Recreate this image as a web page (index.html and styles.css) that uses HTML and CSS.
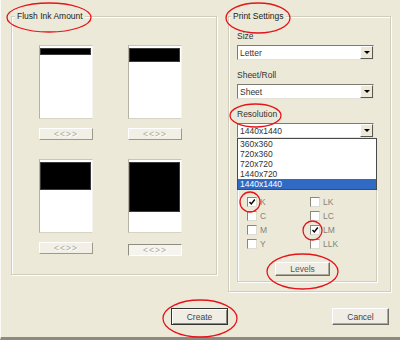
FILE: index.html
```html
<!DOCTYPE html>
<html>

<head>
  <title>Create Flush Pattern</title>
  <link rel="stylesheet" href="styles.css">
</head>

<body>
  <div class="window">
    <div class="panels">
      <fieldset class="group flush">
        <legend>Flush Ink Amount</legend>
        <div class="previews">
          <div class="cell">
            <div class="preview"><div class="ink" style="height: 7px"></div></div>
            <button class="nudge">&lt;&lt;&gt;&gt;</button>
          </div>
          <div class="cell">
            <div class="preview"><div class="ink" style="height: 14px"></div></div>
            <button class="nudge">&lt;&lt;&gt;&gt;</button>
          </div>
          <div class="cell">
            <div class="preview"><div class="ink" style="height: 28px"></div></div>
            <button class="nudge">&lt;&lt;&gt;&gt;</button>
          </div>
          <div class="cell">
            <div class="preview"><div class="ink" style="height: 50px"></div></div>
            <button class="nudge pressed">&lt;&lt;&gt;&gt;</button>
          </div>
        </div>
      </fieldset>

      <fieldset class="group settings">
        <legend>Print Settings</legend>
        <div class="field">
          <div class="label">Size</div>
          <div class="combo"><span>Letter</span><span class="drop"></span></div>
        </div>
        <div class="field">
          <div class="label">Sheet/Roll</div>
          <div class="combo"><span>Sheet</span><span class="drop"></span></div>
        </div>
        <div class="field">
          <div class="label">Resolution</div>
          <div class="combo"><span>1440x1440</span><span class="drop"></span></div>
          <ul class="list">
            <li>360x360</li>
            <li>720x360</li>
            <li>720x720</li>
            <li>1440x720</li>
            <li class="selected">1440x1440</li>
          </ul>
          <div class="inks">
            <div class="checks">
              <label class="check"><span class="box on"></span>K</label>
              <label class="check"><span class="box"></span>LK</label>
              <label class="check"><span class="box"></span>C</label>
              <label class="check"><span class="box"></span>LC</label>
              <label class="check"><span class="box"></span>M</label>
              <label class="check"><span class="box on"></span>LM</label>
              <label class="check"><span class="box"></span>Y</label>
              <label class="check"><span class="box"></span>LLK</label>
            </div>
            <button class="btn levels">Levels</button>
          </div>
        </div>
      </fieldset>
    </div>

    <div class="actions">
      <button class="btn default">Create</button>
      <button class="btn">Cancel</button>
    </div>

    <svg class="marks" width="400" height="340" viewBox="0 0 400 340">
      <ellipse cx="49" cy="17.5" rx="42" ry="14.5" />
      <ellipse cx="258" cy="18" rx="32" ry="15" />
      <ellipse cx="255.5" cy="115.5" rx="25.5" ry="11.5" />
      <ellipse cx="250" cy="202" rx="10" ry="10" />
      <ellipse cx="312.5" cy="230.5" rx="9.5" ry="9.5" />
      <ellipse cx="302.5" cy="271.5" rx="35.5" ry="17.5" />
      <ellipse cx="200" cy="318.5" rx="37" ry="18.5" />
    </svg>
  </div>
</body>

</html>
```

FILE: styles.css
```css
body {
  margin: 0;
  font-family: "Liberation Sans", Arial, sans-serif;
  font-size: 8.5px;
  color: #333;
  background-color: #ece9d8;
}

.window {
  position: relative;
  width: 400px;
  height: 340px;
  box-sizing: border-box;
  border-left: 1px solid #fbfaf6;
  border-bottom: 3px solid #8c8a80;
  background-color: #ece9d8;
}

.panels {
  display: flex;
  align-items: flex-start;
  gap: 11px;
  padding-left: 10px;
}

.group {
  margin: 10px 0 0;
  box-sizing: border-box;
  border: 1px solid #d0cdbd;
  box-shadow: inset 1px 1px 0 #fff, 1px 1px 0 #fff;
  min-width: 0;
}

.group legend {
  padding: 0 2px;
  line-height: 12px;
  background-color: #ece9d8;
  color: #222;
}

.flush {
  width: 206px;
  padding: 23px 0 18px 3px;
}

.settings {
  width: 163px;
  padding: 8px 13px 9px 2px;
}

/* flush ink previews */

.previews {
  display: grid;
  grid-template-columns: 54px 54px;
  column-gap: 35px;
  row-gap: 19px;
  align-items: start;
  margin-left: 24px;
}

.cell {
  display: flex;
  flex-direction: column;
  gap: 9px;
}

.preview {
  height: 74px;
  box-sizing: border-box;
  padding: 2px 1px 0 0;
  background-color: #fff;
  border: 1px solid;
  border-color: #c9c6b6 #f4f3ee #d6d3c6 #b5b2a3;
}

.ink {
  background-color: #000;
  border: 1px solid #3a3a3a;
  box-sizing: border-box;
}

.nudge {
  height: 12px;
  padding: 0;
  font: inherit;
  line-height: 10px;
  letter-spacing: 1px;
  color: #aca899;
  text-shadow: 1px 1px 0 #fff;
  background-color: #f1efe6;
  border: 1px solid;
  border-color: #fff #9d9a8c #9d9a8c #fff;
}

.nudge.pressed {
  margin-top: 2px;
  background-color: #f5f4ef;
  border-color: #8f8d80 #fff #fff #8f8d80;
}

/* print settings */

.field {
  margin-left: 6px;
}

.field + .field {
  margin-top: 9px;
}

.label {
  line-height: 12px;
  margin-bottom: 3px;
}

.combo {
  display: flex;
  align-items: center;
  width: 137px;
  height: 15px;
  box-sizing: border-box;
  padding-left: 2px;
  background-color: #fff;
  border: 1px solid;
  border-color: #7d7b72 #e4e2d8 #e4e2d8 #7d7b72;
}

.drop {
  margin-left: auto;
  width: 13px;
  height: 13px;
  box-sizing: border-box;
  display: flex;
  align-items: center;
  justify-content: center;
  background-color: #ece9d8;
  border: 1px solid;
  border-color: #fff #5a584f #5a584f #fff;
}

.drop::after {
  content: "";
  border-left: 3px solid transparent;
  border-right: 3px solid transparent;
  border-top: 3px solid #000;
}

.list {
  list-style: none;
  margin: 0;
  padding: 0;
  width: 140px;
  box-sizing: border-box;
  background-color: #fff;
  border: 1px solid #4a4a48;
}

.list li {
  line-height: 10px;
  padding-left: 2px;
}

.list .selected {
  background-color: #316ac5;
  color: #fff;
}

.inks {
  width: 140px;
  box-sizing: border-box;
  padding: 7px 0 5px 9px;
  border: 1px solid #d0cdbd;
  border-top: none;
  box-shadow: inset 1px 0 0 #fff, 1px 1px 0 #fff;
}

.checks {
  display: grid;
  grid-template-columns: 63px auto;
  row-gap: 4px;
}

.check {
  display: flex;
  align-items: center;
  gap: 3px;
  line-height: 10px;
  color: #85837a;
}

.box {
  width: 10px;
  height: 10px;
  box-sizing: border-box;
  background-color: #fff;
  border: 1px solid;
  border-color: #8a887c #dedcd2 #dedcd2 #8a887c;
}

.box.on {
  background: #fff url("data:image/svg+xml,%3Csvg xmlns='http://www.w3.org/2000/svg' width='8' height='8'%3E%3Cpath d='M1.5 4 L3.3 6 L6.8 1.5' fill='none' stroke='%23000' stroke-width='1.4'/%3E%3C/svg%3E") center no-repeat;
}

/* buttons */

.btn {
  width: 57px;
  height: 17px;
  padding: 0;
  font: inherit;
  color: #444;
  background-color: #efede4;
  border: 1px solid;
  border-color: #fff #6f6d64 #6f6d64 #fff;
  box-shadow: inset -1px -1px 0 #aca899;
}

.levels {
  width: 55px;
  height: 14px;
  margin-top: 13px;
  margin-left: 28px;
  color: #555;
}

.btn.default {
  border-color: #333;
  box-shadow: inset 1px 1px 0 #fff, inset -1px -1px 0 #8a887c;
}

.actions {
  display: flex;
  justify-content: flex-end;
  gap: 104px;
  margin-top: 16px;
  padding-right: 11px;
}

.marks {
  position: absolute;
  left: -1px;
  top: 0;
  pointer-events: none;
  fill: none;
  stroke: #e5141b;
  stroke-width: 1.3;
}
```
